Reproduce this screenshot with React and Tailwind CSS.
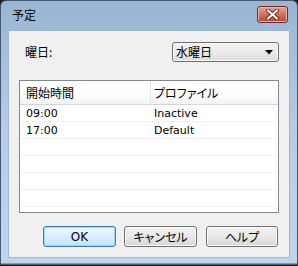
import React from "react";

const jp = "font-['Noto_Sans_CJK_JP',sans-serif] [font-feature-settings:'palt']";
const latin = "font-['DejaVu_Sans','Noto_Sans_CJK_JP',sans-serif]";

const rows = [
  { time: "09:00", profile: "Inactive" },
  { time: "17:00", profile: "Default" },
  { time: "", profile: "" },
  { time: "", profile: "" },
  { time: "", profile: "" },
  { time: "", profile: "" },
];

function Button({ children, primary, className }) {
  return (
    <button
      className={
        "h-[21px] rounded-[3px] border text-[12px] leading-none text-black flex items-center justify-center " +
        (primary
          ? "border-[#3c7fb1] bg-gradient-to-b from-[#edf7fd] via-[#d9effc] to-[#bfe4f9] shadow-[inset_0_0_0_1px_#98d9f3] "
          : "border-[#707070] bg-gradient-to-b from-[#f2f2f2] via-[#e8e8e8] to-[#d6d6d6] shadow-[inset_0_0_0_1px_#fcfcfc] ") +
        className
      }
    >
      {children}
    </button>
  );
}

function App() {
  return (
    <div className="w-[298px] h-[266px] overflow-hidden bg-[#1e1e1e]">
      <div className="w-[298px] h-[265px] rounded-t-[6px] border border-[#46586e] bg-gradient-to-b from-[#9ab5d4] via-[#b5cde6] to-[#bdd5ee] flex flex-col shadow-[inset_0_-1px_0_#42b6d9]">
        {/* title bar */}
        <div className="h-[29px] flex items-center justify-between pl-[11px] pr-[9px]">
          <span className={jp + " text-[12px] text-black leading-none mt-[-2px]"}>予定</span>
          <div className="w-[31px] h-[17px] mt-[-2px] rounded-[3px] border border-[#6b2a22] bg-gradient-to-b from-[#e8a597] via-[#d1705e] to-[#c0412d] shadow-[inset_0_0_0_1px_#eeb5a9] flex items-center justify-center">
            <svg width="13" height="11" viewBox="0 0 13 11">
              <path
                d="M2 1.5 L11 9.5 M11 1.5 L2 9.5"
                stroke="#5a2a22"
                strokeWidth="4"
                strokeLinecap="round"
              />
              <path
                d="M2 1.5 L11 9.5 M11 1.5 L2 9.5"
                stroke="#ffffff"
                strokeWidth="2.2"
                strokeLinecap="round"
              />
            </svg>
          </div>
        </div>

        {/* client area */}
        <div className="mx-[7px] h-[228px] border border-[#9fb6cf] bg-[#f0f0f0] flex flex-col pt-[11px] pl-[10px] pr-[10px]">
          <div className="flex items-center justify-between h-[20px]">
            <span className={jp + " ml-[6px] text-[12px] text-black leading-none"}>曜日:</span>
            <div className="w-[107px] h-[20px] rounded-[3px] border border-[#707070] bg-gradient-to-b from-[#f2f2f2] via-[#ebebeb] to-[#dcdcdc] shadow-[inset_0_0_0_1px_#fbfbfb] flex items-center justify-between pl-[3px] pr-[5px]">
              <span className={jp + " text-[12px] text-black leading-none"}>水曜日</span>
              <svg width="8" height="5" viewBox="0 0 8 5">
                <path d="M0 0 H8 L4 4.5 Z" fill="#000000" />
              </svg>
            </div>
          </div>

          <div className="mt-[18px] h-[133px] border border-[#828790] bg-white flex flex-col overflow-hidden">
            <div className="h-[24px] flex border-b border-[#d5d5d5] bg-gradient-to-b from-white via-white to-[#f1f2f4]">
              <div className={jp + " w-[131px] border-r border-[#e3e4e6] flex items-center pl-[6px] text-[12px] text-black leading-none"}>
                開始時間
              </div>
              <div className={jp + " flex-1 flex items-center pl-[3px] text-[12px] text-black leading-none"}>
                プロファイル
              </div>
            </div>
            {rows.map((r, i) => (
              <div key={i} className="h-[17px] shrink-0 flex border-b border-[#f0f0f0]">
                <div className={latin + " w-[132px] flex items-center pl-[6px] text-[11px] text-black leading-none"}>
                  {r.time}
                </div>
                <div className={latin + " flex-1 flex items-center pl-[2px] text-[11px] text-black leading-none"}>
                  {r.profile}
                </div>
              </div>
            ))}
          </div>

          <div className="mt-[13px] flex justify-end pr-[1px]">
            <Button primary className={latin + " w-[73px]"}>OK</Button>
            <Button className={jp + " w-[73px] ml-[8px]"}>キャンセル</Button>
            <Button className={jp + " w-[72px] ml-[9px]"}>ヘルプ</Button>
          </div>
        </div>
      </div>
    </div>
  );
}

export default App;
